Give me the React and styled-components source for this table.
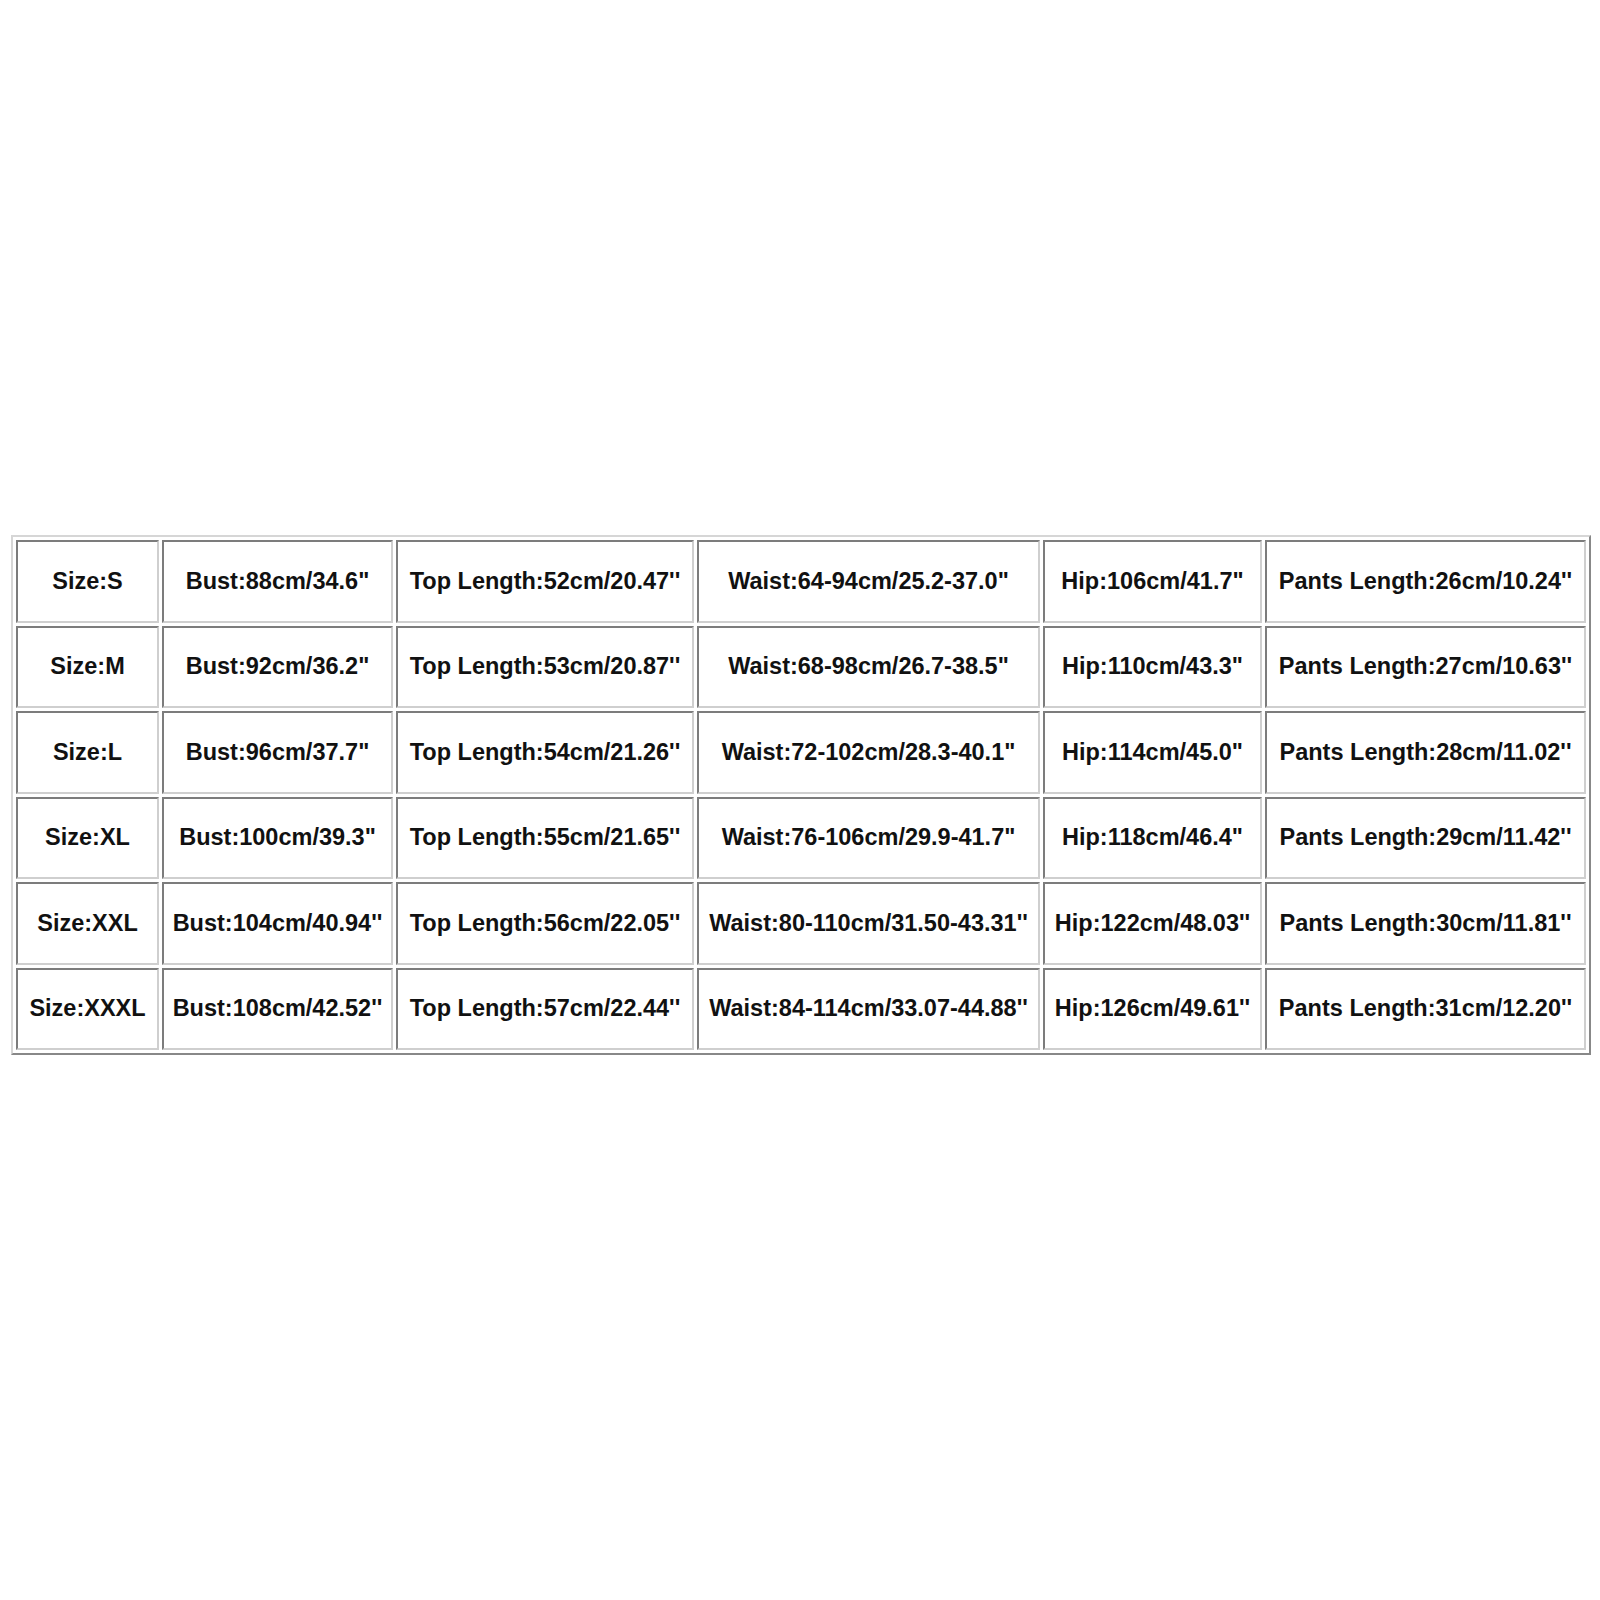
import styled, { createGlobalStyle } from "styled-components";

const GlobalStyle = createGlobalStyle`
  html, body {
    margin: 0;
    padding: 0;
    background: #ffffff;
  }
`;

const Page = styled.div`
  width: 1600px;
  height: 1600px;
  box-sizing: border-box;
  padding: 535px 9px 0 11px;
  background: #ffffff;
`;

const SizeTable = styled.table`
  table-layout: fixed;
  width: 1580px;
  border-collapse: separate;
  border-spacing: 3px;
  border: 2px solid;
  border-color: #d6d6d6 #888888 #888888 #d6d6d6;
  font-family: "Liberation Sans", Arial, sans-serif;
`;

const Row = styled.tr`
  height: 82.5px;
`;

const Cell = styled.td`
  box-sizing: border-box;
  width: ${({ $w }) => $w}px;
  padding: 0;
  border: 2px solid;
  border-color: #7c7c7c #cfcfcf #cfcfcf #7c7c7c;
  text-align: center;
  vertical-align: middle;
  white-space: nowrap;
  font-size: 23.5px;
  font-weight: bold;
  color: #111111;
`;

const widths = [143, 231, 298, 343, 219, 321];

const rows = [
  ["Size:S", 'Bust:88cm/34.6"', "Top Length:52cm/20.47''", 'Waist:64-94cm/25.2-37.0"', 'Hip:106cm/41.7"', "Pants Length:26cm/10.24''"],
  ["Size:M", 'Bust:92cm/36.2"', "Top Length:53cm/20.87''", 'Waist:68-98cm/26.7-38.5"', 'Hip:110cm/43.3"', "Pants Length:27cm/10.63''"],
  ["Size:L", 'Bust:96cm/37.7"', "Top Length:54cm/21.26''", 'Waist:72-102cm/28.3-40.1"', 'Hip:114cm/45.0"', "Pants Length:28cm/11.02''"],
  ["Size:XL", 'Bust:100cm/39.3"', "Top Length:55cm/21.65''", 'Waist:76-106cm/29.9-41.7"', 'Hip:118cm/46.4"', "Pants Length:29cm/11.42''"],
  ["Size:XXL", "Bust:104cm/40.94''", "Top Length:56cm/22.05''", "Waist:80-110cm/31.50-43.31''", "Hip:122cm/48.03''", "Pants Length:30cm/11.81''"],
  ["Size:XXXL", "Bust:108cm/42.52''", "Top Length:57cm/22.44''", "Waist:84-114cm/33.07-44.88''", "Hip:126cm/49.61''", "Pants Length:31cm/12.20''"]
];

export default function App() {
  return (
    <Page>
      <GlobalStyle />
      <SizeTable>
        <tbody>
          {rows.map((row, i) => (
            <Row key={i}>
              {row.map((text, j) => (
                <Cell key={j} $w={widths[j]}>
                  {text}
                </Cell>
              ))}
            </Row>
          ))}
        </tbody>
      </SizeTable>
    </Page>
  );
}
